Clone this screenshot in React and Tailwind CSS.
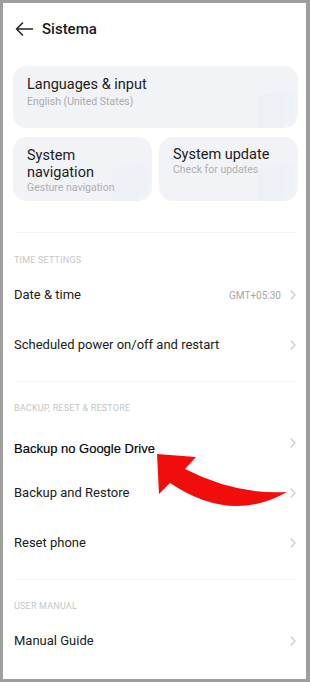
import React from 'react';

const FONT = { fontFamily: 'Roboto, "Noto Sans", Arial, sans-serif' };

function Chevron() {
  return (
    <svg width="6" height="10" viewBox="0 0 6 10" className="shrink-0">
      <path d="M1 1 L5 5 L1 9" fill="none" stroke="#c9c9c9" strokeWidth="1.2" strokeLinecap="round" strokeLinejoin="round" />
    </svg>
  );
}

function SectionLabel({ children, className = '' }) {
  return (
    <div className={`pl-[1px] text-[9px] leading-[12px] tracking-[0.2px] text-[#c6c6c6] ${className}`}>{children}</div>
  );
}

function Row({ label, value, children }) {
  return (
    <div className="h-[50px] flex items-center justify-between pl-[1px] pr-[2px]">
      {children || <span className="text-[13px] text-[#202020]">{label}</span>}
      <div className="flex items-center gap-[9px]">
        {value && <span className="text-[10px] text-[#a6a6a6]">{value}</span>}
        <Chevron />
      </div>
    </div>
  );
}

function Divider({ className = '' }) {
  return <div className={`h-px bg-[#f4f4f4] mx-[2px] ${className}`} />;
}

function CardDeco() {
  return (
    <div className="absolute right-0 bottom-0 w-[50px] h-[44px] pointer-events-none">
      <div className="absolute right-[14px] bottom-0 w-[26px] h-[34px] rounded-tl-[6px] bg-[#ebeef4] opacity-60" />
      <div className="absolute right-[4px] bottom-[6px] w-[18px] h-[30px] rounded-[4px] bg-[#edf0f5] opacity-70" />
    </div>
  );
}

export default function App() {
  return (
    <div
      className="relative w-[310px] h-[682px] bg-white border-l-[3px] border-t-[3px] border-r-[4px] border-b-[3px] border-[#9e9e9e] overflow-hidden"
      style={FONT}
    >
      <div className="h-[52px] flex items-center pl-[12px] gap-[9px]">
        <svg width="18" height="14" viewBox="0 0 18 14">
          <path d="M17.5 7 H1.5 M7.5 1 L1.5 7 L7.5 13" fill="none" stroke="#262626" strokeWidth="1.6" strokeLinecap="round" strokeLinejoin="round" />
        </svg>
        <span className="text-[15px] font-medium text-[#1b1b1b]">Sistema</span>
      </div>

      <div className="pl-[10px] pr-[8px]">
        <div className="relative mt-[11px] h-[62px] rounded-[14px] bg-[#f1f3f7] pl-[14px] pt-[10px] overflow-hidden">
          <CardDeco />
          <div className="relative text-[14.5px] leading-[18px] text-[#1c1c1c]">Languages &amp; input</div>
          <div className="relative mt-px text-[10.5px] leading-[14px] text-[#ababab]">English (United States)</div>
        </div>

        <div className="mt-[9px] grid grid-cols-2 gap-[7px]">
          <div className="relative h-[64px] rounded-[14px] bg-[#f1f3f7] pl-[14px] pt-[10px] overflow-hidden">
            <CardDeco />
            <div className="relative text-[14.5px] leading-[17px] text-[#1c1c1c]">System<br />navigation</div>
            <div className="relative text-[10.5px] leading-[14px] text-[#b0b0b0]">Gesture navigation</div>
          </div>
          <div className="relative h-[64px] rounded-[14px] bg-[#f1f3f7] pl-[14px] pt-[9px] overflow-hidden">
            <CardDeco />
            <div className="relative text-[14.5px] leading-[17px] text-[#1c1c1c]">System update</div>
            <div className="relative text-[10.5px] leading-[14px] text-[#b0b0b0]">Check for updates</div>
          </div>
        </div>

        <Divider className="mt-[31px]" />
        <SectionLabel className="mt-[21px] mb-[4px]">TIME SETTINGS</SectionLabel>
        <Row label="Date & time" value="GMT+05:30" />
        <Row label="Scheduled power on/off and restart" />

        <Divider className="mt-[11px]" />
        <SectionLabel className="mt-[20px] mb-[4px]">BACKUP, RESET &amp; RESTORE</SectionLabel>
        <Row>
          <span
            className="relative top-[6px] text-[13px] text-black [-webkit-text-stroke:0.15px_black]"
            style={{ fontFamily: '"Liberation Sans", Arial, sans-serif' }}
          >
            Backup no Google Drive
          </span>
        </Row>
        <Row label="Backup and Restore" />
        <Row label="Reset phone" />

        <Divider className="mt-[11px]" />
        <SectionLabel className="mt-[20px] mb-[4px]">USER MANUAL</SectionLabel>
        <Row label="Manual Guide" />
      </div>

      <svg
        className="absolute left-[-3px] top-[-3px] w-[310px] h-[682px] pointer-events-none"
        viewBox="0 0 310 682"
      >
        <path
          d="M157 454 L196 457 L185 469 Q236 495 287 492 Q231 524 170 483 L159 494 Z"
          fill="#f20d0d"
        />
      </svg>
    </div>
  );
}
